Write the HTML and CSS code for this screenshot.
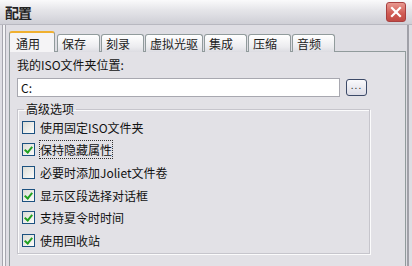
FILE: index.html
```html
<!DOCTYPE html>
<html lang="zh-CN">
<head>
<meta charset="utf-8"/>
<title>配置</title>
<link rel="stylesheet" href="styles.css">
</head>
<body>
  <div class="window">
    <div class="titlebar">
      <span class="title">配置</span>
      <span class="close">
        <svg width="12" height="12" viewBox="0 0 12 12"><path d="M2 2 L10 10 M10 2 L2 10" stroke="#fff" stroke-width="2.2" stroke-linecap="square"/></svg>
      </span>
    </div>
    <div class="frame">
      <div class="tabs">
        <span class="tab active">通用</span>
        <span class="tab">保存</span>
        <span class="tab">刻录</span>
        <span class="tab">虚拟光驱</span>
        <span class="tab">集成</span>
        <span class="tab">压缩</span>
        <span class="tab">音频</span>
      </div>
      <div class="panel">
        <div class="label">我的ISO文件夹位置:</div>
        <div class="path-row">
          <div class="input">C:</div>
          <span class="browse">...</span>
        </div>
        <fieldset class="group">
          <legend>高级选项</legend>
          <label class="opt"><span class="box"></span>使用固定ISO文件夹</label>
          <label class="opt"><span class="box checked"></span><span class="focus">保持隐藏属性</span></label>
          <label class="opt"><span class="box"></span>必要时添加Joliet文件卷</label>
          <label class="opt"><span class="box checked"></span>显示区段选择对话框</label>
          <label class="opt"><span class="box checked"></span>支持夏令时时间</label>
          <label class="opt"><span class="box checked"></span>使用回收站</label>
        </fieldset>
      </div>
    </div>
  </div>
</body>
</html>
```

FILE: styles.css
```css
html, body {
  margin: 0;
  height: 100%;
}
body {
  width: 412px;
  height: 266px;
  overflow: hidden;
  background-color: #dedde3;
  font-family: "Noto Sans CJK SC", "Noto Sans", sans-serif;
  font-size: 12px;
  color: #111;
}
.window {
  height: 100%;
  display: flex;
  flex-direction: column;
}
.titlebar {
  height: 24px;
  flex: none;
  display: flex;
  align-items: center;
  justify-content: space-between;
  padding: 0 6px 0 5px;
  background: linear-gradient(#fafafb, #e6e6ea 40%, #cfcfd6);
  border-bottom: 1px solid #b8b8c0;
}
.title {
  font-weight: bold;
  font-size: 14px;
  color: #222;
  letter-spacing: -1px;
}
.close {
  width: 18px;
  height: 18px;
  border: 1px solid #a84040;
  border-radius: 3px;
  background: linear-gradient(#e89890, #d05a52 60%, #c04a44);
  display: flex;
  align-items: center;
  justify-content: center;
}
.frame {
  flex: 1;
  display: flex;
  flex-direction: column;
  margin-left: 2px;
  border-left: 1px solid #a6a6ae;
  border-right: 2px solid #a0a0a8;
  padding: 6px 1px 0 6px;
  margin-right: 3px;
  box-shadow: inset 2px 0 0 #f4f4f6, inset 3px 0 0 #a6a6ae;
}
.tabs {
  display: flex;
  align-items: flex-end;
  height: 20px;
  padding-left: 2px;
  flex: none;
}
.tab {
  height: 17px;
  line-height: 18px;
  min-width: 33px;
  padding: 0 4px 0 4px;
  margin-right: 1px;
  border: 1px solid #919b9c;
  border-bottom: none;
  border-radius: 3px 3px 0 0;
  background: linear-gradient(#ffffff, #ececef 70%, #dcdce2);
  color: #222;
  position: relative;
  top: 1px;
}
.tab.active {
  height: 19px;
  line-height: 21px;
  padding: 0 5px 0 6px;
  margin-left: -2px;
  margin-right: 2px;
  border-top: 2px solid #f0b030;
  background: #f5f4f6;
  z-index: 1;
}
.panel {
  flex: 1;
  border: 1px solid #919b9c;
  border-bottom: none;
  background: #e2e1e6;
  padding: 4px 0 0 7px;
}
.label {
  height: 18px;
  line-height: 18px;
}
.path-row {
  display: flex;
  align-items: center;
  gap: 6px;
  margin-top: 4px;
}
.input {
  width: 318px;
  height: 17px;
  line-height: 17px;
  padding-left: 3px;
  background: #fff;
  border: 1px solid #a8a8b0;
}
.browse {
  width: 19px;
  height: 15px;
  border: 1px solid #3c4a68;
  border-radius: 3px;
  background: linear-gradient(#fafafc, #dcdce6);
  font-size: 10px;
  line-height: 10px;
  text-align: center;
  color: #333;
  letter-spacing: 1px;
}
.group {
  width: 347px;
  margin: 5px 0 0 0;
  padding: 0 0 0 4px;
  height: 150px;
  border: 1px solid #c6c5cc;
  box-shadow: 1px 1px 0 #fbfbfc, inset 1px 1px 0 #fbfbfc;
  display: flex;
  flex-direction: column;
}
.group legend {
  padding: 0 2px;
  margin-left: 2px;
  line-height: 14px;
}
.opt {
  display: flex;
  align-items: center;
  height: 22.6px;
  gap: 5px;
}
.box {
  width: 11px;
  height: 11px;
  border: 1px solid #1c5180;
  background: linear-gradient(135deg, #dcdcd6, #fbfbfa);
  position: relative;
  flex: none;
}
.box.checked::after {
  content: "";
  position: absolute;
  left: 3px;
  top: 1px;
  width: 3px;
  height: 6px;
  border: solid #21a121;
  border-width: 0 2px 2px 0;
  transform: rotate(40deg);
}
.focus {
  outline: 1px dotted #333;
  outline-offset: 0;
}
```
